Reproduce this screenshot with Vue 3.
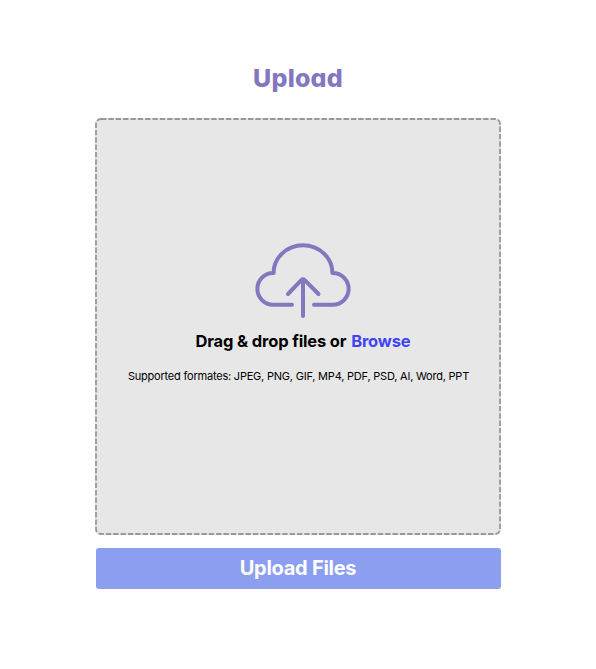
<script setup>
const formats = ['JPEG', 'PNG', 'GIF', 'MP4', 'PDF', 'PSD', 'AI', 'Word', 'PPT']
</script>

<template>
  <main class="page">
    <h1 class="title">Upload</h1>
    <section class="dropzone">
      <svg class="outline" width="406" height="417" viewBox="0 0 406 417">
        <rect x="1" y="1" width="404" height="415" rx="5" />
      </svg>
      <svg class="cloud" width="98" height="76" viewBox="0 0 98 76">
        <path d="M38 62.7H19.2A15.85 15.85 0 0 1 19.2 31H19.6A29.4 27.8 0 0 1 78.4 31H78.8A15.85 15.85 0 0 1 78.8 62.7H60" />
        <path d="M49 74V37.5M34 52L47.3 38.2Q49 36.6 50.7 38.2L64.5 52" />
      </svg>
      <p class="prompt">Drag &amp; drop files or <a class="browse">Browse</a></p>
      <p class="formats">Supported formates: {{ formats.join(', ') }}</p>
    </section>
    <button class="submit" type="button">Upload Files</button>
  </main>
</template>

<style>
body {
  margin: 0;
  background: #fff;
}
</style>

<style scoped>
.page {
  box-sizing: border-box;
  width: 596px;
  height: 669px;
  padding: 60px 95px 0;
  font-family: Inter, "Liberation Sans", sans-serif;
}
.title {
  margin: 0 0 22px;
  text-align: center;
  font-size: 25px;
  line-height: 36px;
  font-weight: 800;
  letter-spacing: 0.2px;
  color: #8477c0;
  font-feature-settings: "cv11";
}
.dropzone {
  position: relative;
  box-sizing: border-box;
  width: 406px;
  height: 417px;
  padding-top: 124px;
  display: flex;
  flex-direction: column;
  align-items: center;
  border-radius: 6px;
  background: #e7e7e7;
}
.outline {
  position: absolute;
  inset: 0;
  fill: none;
  stroke: #999;
  stroke-width: 1.8;
  stroke-dasharray: 5.4 1.95;
}
.cloud {
  margin-left: 10px;
  fill: none;
  stroke: #8477c0;
  stroke-width: 4;
  stroke-linecap: round;
  stroke-linejoin: round;
}
.prompt {
  margin: 12px 0 0;
  padding-left: 10px;
  font-size: 16.5px;
  line-height: 22px;
  font-weight: 700;
  letter-spacing: -0.15px;
  color: #000;
  white-space: nowrap;
}
.browse {
  margin-left: 1px;
  color: #3f45f5;
}
.formats {
  margin: 15px 0 0;
  padding-left: 1px;
  font-size: 11px;
  line-height: 18px;
  letter-spacing: -0.21px;
  color: #000;
  white-space: nowrap;
}
.submit {
  display: block;
  width: 405px;
  height: 41px;
  margin: 13px 0 0 0.5px;
  padding: 0;
  border: 0;
  border-radius: 3px;
  background: #8c9ef0;
  color: #fff;
  font: 700 20px/41px Inter, "Liberation Sans", sans-serif;
  letter-spacing: -0.27px;
}
</style>
